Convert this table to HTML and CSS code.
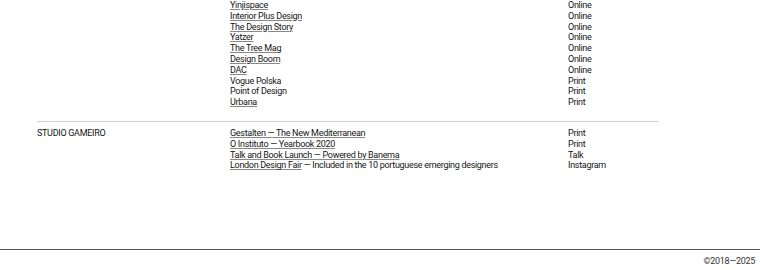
FILE: index.html
```html
<!DOCTYPE html>
<html>
<head>
<meta charset="utf-8">
<link rel="stylesheet" href="styles.css">
</head>
<body>
<main class="page">
  <section class="group">
    <div class="studio"></div>
    <ul class="list">
      <li class="row"><span class="title"><a href="#">Yinjispace</a></span><span class="type">Online</span></li>
      <li class="row"><span class="title"><a href="#">Interior Plus Design</a></span><span class="type">Online</span></li>
      <li class="row"><span class="title"><a href="#">The Design Story</a></span><span class="type">Online</span></li>
      <li class="row"><span class="title"><a href="#">Yatzer</a></span><span class="type">Online</span></li>
      <li class="row"><span class="title"><a href="#">The Tree Mag</a></span><span class="type">Online</span></li>
      <li class="row"><span class="title"><a href="#">Design Boom</a></span><span class="type">Online</span></li>
      <li class="row"><span class="title"><a href="#">DAC</a></span><span class="type">Online</span></li>
      <li class="row"><span class="title">Vogue Polska</span><span class="type">Print</span></li>
      <li class="row"><span class="title">Point of Design</span><span class="type">Print</span></li>
      <li class="row"><span class="title"><a href="#">Urbana</a></span><span class="type">Print</span></li>
    </ul>
  </section>
  <section class="group divided">
    <div class="studio">STUDIO GAMEIRO</div>
    <ul class="list">
      <li class="row"><span class="title"><a href="#">Gestalten — The New Mediterranean</a></span><span class="type">Print</span></li>
      <li class="row"><span class="title"><a href="#">O Instituto — Yearbook 2020</a></span><span class="type">Print</span></li>
      <li class="row"><span class="title"><a href="#">Talk and Book Launch — Powered by Banema</a></span><span class="type">Talk</span></li>
      <li class="row"><span class="title"><a href="#">London Design Fair</a> — Included in the 10 portuguese emerging designers</span><span class="type">Instagram</span></li>
    </ul>
  </section>
</main>
<footer class="footer">
  <span class="copy">©2018—2025</span>
</footer>
</body>
</html>
```

FILE: styles.css
```css
html, body {
  margin: 0;
  padding: 0;
  background: #fff;
}
body {
  font-family: Roboto, "Liberation Sans", Arial, sans-serif;
  font-size: 9px;
  line-height: 10.8px;
  letter-spacing: -0.3px;
  color: #151515;
}
.page {
  padding: 0 102px 0 37px;
  height: 249px;
  box-sizing: border-box;
}
.group {
  display: grid;
  grid-template-columns: 193px 1fr;
  padding-bottom: 13px;
}
.group.divided {
  border-top: 1px solid #cfcfcf;
  padding-top: 6px;
}
.list {
  list-style: none;
  margin: 0;
  padding: 0;
}
.row {
  display: grid;
  grid-template-columns: 338px 1fr;
}
.title a {
  color: #151515;
  text-decoration: underline;
  text-decoration-color: #888;
  text-underline-offset: 1px;
}
.footer {
  border-top: 1px solid #555;
  display: flex;
  justify-content: flex-end;
  padding: 6px 5px 0 0;
}
.copy {
  color: #333;
}
```
